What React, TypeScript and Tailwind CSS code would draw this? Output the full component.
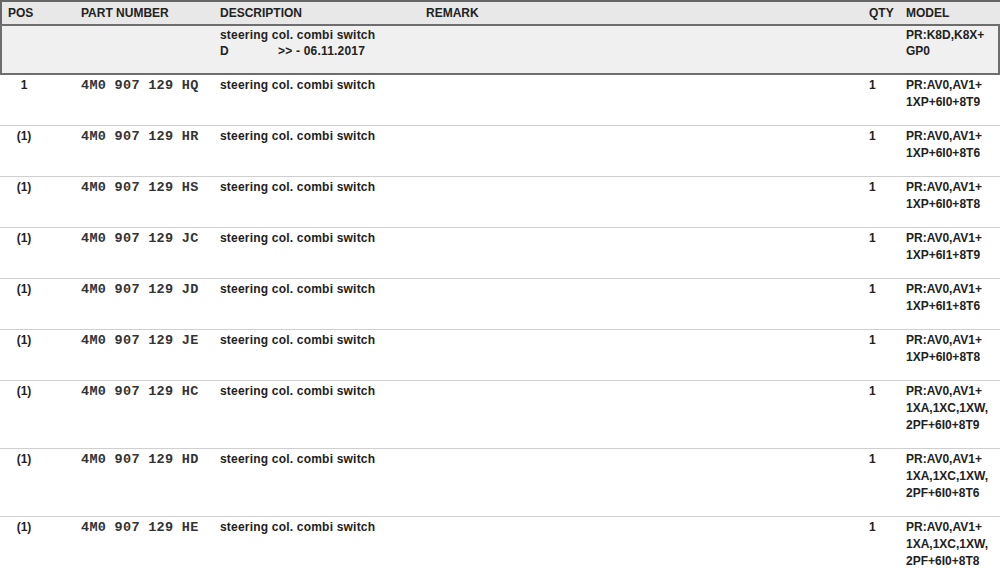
import React from "react";

type Part = {
  pos: string;
  number: string;
  model: string[];
};

const parts: Part[] = [
  { pos: "1", number: "4M0 907 129 HQ", model: ["PR:AV0,AV1+", "1XP+6I0+8T9"] },
  { pos: "(1)", number: "4M0 907 129 HR", model: ["PR:AV0,AV1+", "1XP+6I0+8T6"] },
  { pos: "(1)", number: "4M0 907 129 HS", model: ["PR:AV0,AV1+", "1XP+6I0+8T8"] },
  { pos: "(1)", number: "4M0 907 129 JC", model: ["PR:AV0,AV1+", "1XP+6I1+8T9"] },
  { pos: "(1)", number: "4M0 907 129 JD", model: ["PR:AV0,AV1+", "1XP+6I1+8T6"] },
  { pos: "(1)", number: "4M0 907 129 JE", model: ["PR:AV0,AV1+", "1XP+6I0+8T8"] },
  { pos: "(1)", number: "4M0 907 129 HC", model: ["PR:AV0,AV1+", "1XA,1XC,1XW,", "2PF+6I0+8T9"] },
  { pos: "(1)", number: "4M0 907 129 HD", model: ["PR:AV0,AV1+", "1XA,1XC,1XW,", "2PF+6I0+8T6"] },
  { pos: "(1)", number: "4M0 907 129 HE", model: ["PR:AV0,AV1+", "1XA,1XC,1XW,", "2PF+6I0+8T8"] },
];

const cols = "grid grid-cols-[81px_139px_206px_443px_37px_1fr]";

export default function App() {
  return (
    <div className="w-[1000px] h-[582px] overflow-hidden bg-white text-[12px] font-bold text-[#222] font-['Liberation_Sans',Arial,sans-serif]">
      {/* header */}
      <div className={`${cols} h-[24px] items-center bg-[#e8e8e8] shadow-[inset_2px_2px_0_#666] pt-[1px] leading-[16px]`}>
        <div className="pl-[8px]">POS</div>
        <div>PART NUMBER</div>
        <div>DESCRIPTION</div>
        <div>REMARK</div>
        <div>QTY</div>
        <div>MODEL</div>
      </div>

      {/* group box */}
      <div className={`${cols} h-[51px] bg-[#f0f0f0] border-2 border-[#6e6e6e] pt-[1px] leading-[16px]`}>
        <div className="-ml-[2px]" />
        <div />
        <div className="-ml-[2px] tracking-[0.2px]">
          <div>steering col. combi switch</div>
          <div className="flex">
            <span className="w-[58px]">D</span>
            <span>&gt;&gt; - 06.11.2017</span>
          </div>
        </div>
        <div />
        <div />
        <div className="-ml-[2px]">
          <div>PR:K8D,K8X+</div>
          <div>GP0</div>
        </div>
      </div>

      {/* rows */}
      {parts.map((p, i) => (
        <div
          key={i}
          className={`${cols} items-baseline pt-[2px] pb-[14px] leading-[17px] border-b border-[#cfcfcf]`}
        >
          <div className="w-12 text-center">{p.pos}</div>
          <div className="whitespace-pre font-['Liberation_Mono','Courier_New',monospace] font-bold text-[13.5px] tracking-[0.3px] text-[#333]">
            {p.number}
          </div>
          <div className="tracking-[0.2px]">steering col. combi switch</div>
          <div />
          <div>1</div>
          <div>
            {p.model.map((m) => (
              <div key={m}>{m}</div>
            ))}
          </div>
        </div>
      ))}
    </div>
  );
}
